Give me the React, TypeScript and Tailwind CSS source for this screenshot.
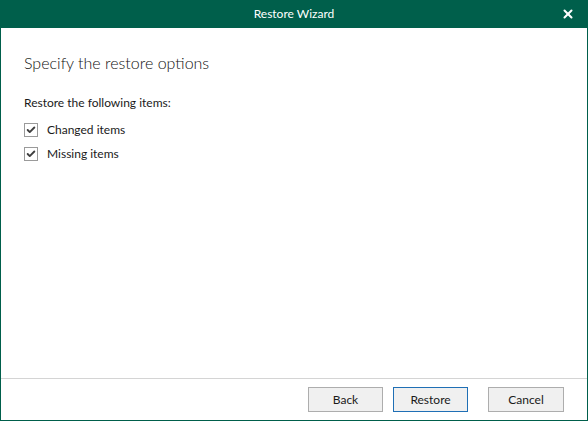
import { Check, X } from 'lucide-react'

function CheckRow({ label }: { label: string }) {
  return (
    <label className="flex items-center h-[24px]">
      <span className="w-[14px] h-[14px] border border-[#9a9a9a] bg-white flex items-center justify-center mr-[9px]">
        <Check className="w-[10px] h-[10px] text-[#3f3f3f]" strokeWidth={4.5} />
      </span>
      <span className="text-[12px] text-[#1a1a1a]">{label}</span>
    </label>
  )
}

export default function App() {
  return (
    <div
      className="w-[588px] h-[421px] flex flex-col bg-white border-x border-b border-[#005f4b]"
      style={{ fontFamily: '"Segoe UI", Lato, "Noto Sans", sans-serif' }}
    >
      {/* Title bar */}
      <div className="h-[28px] -mx-px bg-[#005f4b] flex items-center justify-center relative">
        <span className="text-white text-[12px]">Restore Wizard</span>
        <X className="absolute right-[13px] top-[7px] w-[14px] h-[14px] text-white" strokeWidth={3.5} />
      </div>

      {/* Body */}
      <div className="flex-1 px-[23px]">
        <h1 className="text-[16px] font-light text-[#111111] mt-[25px] leading-[20px]">Specify the restore options</h1>
        <p className="text-[12px] text-[#1a1a1a] mt-[22px] leading-[16px]">Restore the following items:</p>
        <div className="mt-[7px] flex flex-col">
          <CheckRow label="Changed items" />
          <CheckRow label="Missing items" />
        </div>
      </div>

      {/* Footer */}
      <div className="h-[42px] border-t border-[#d4d4d4] flex items-start justify-end pt-[8px] pr-[23px]">
        <button className="w-[75px] h-[25px] bg-[#f0f0f0] border border-[#adadad] text-[12px] text-[#1a1a1a]">Back</button>
        <button className="w-[75px] h-[25px] ml-[10px] bg-[#f0f0f0] border border-[#1f6fb5] text-[12px] text-[#1a1a1a]">Restore</button>
        <button className="w-[76px] h-[25px] ml-[20px] bg-[#f0f0f0] border border-[#adadad] text-[12px] text-[#1a1a1a]">Cancel</button>
      </div>
    </div>
  )
}
